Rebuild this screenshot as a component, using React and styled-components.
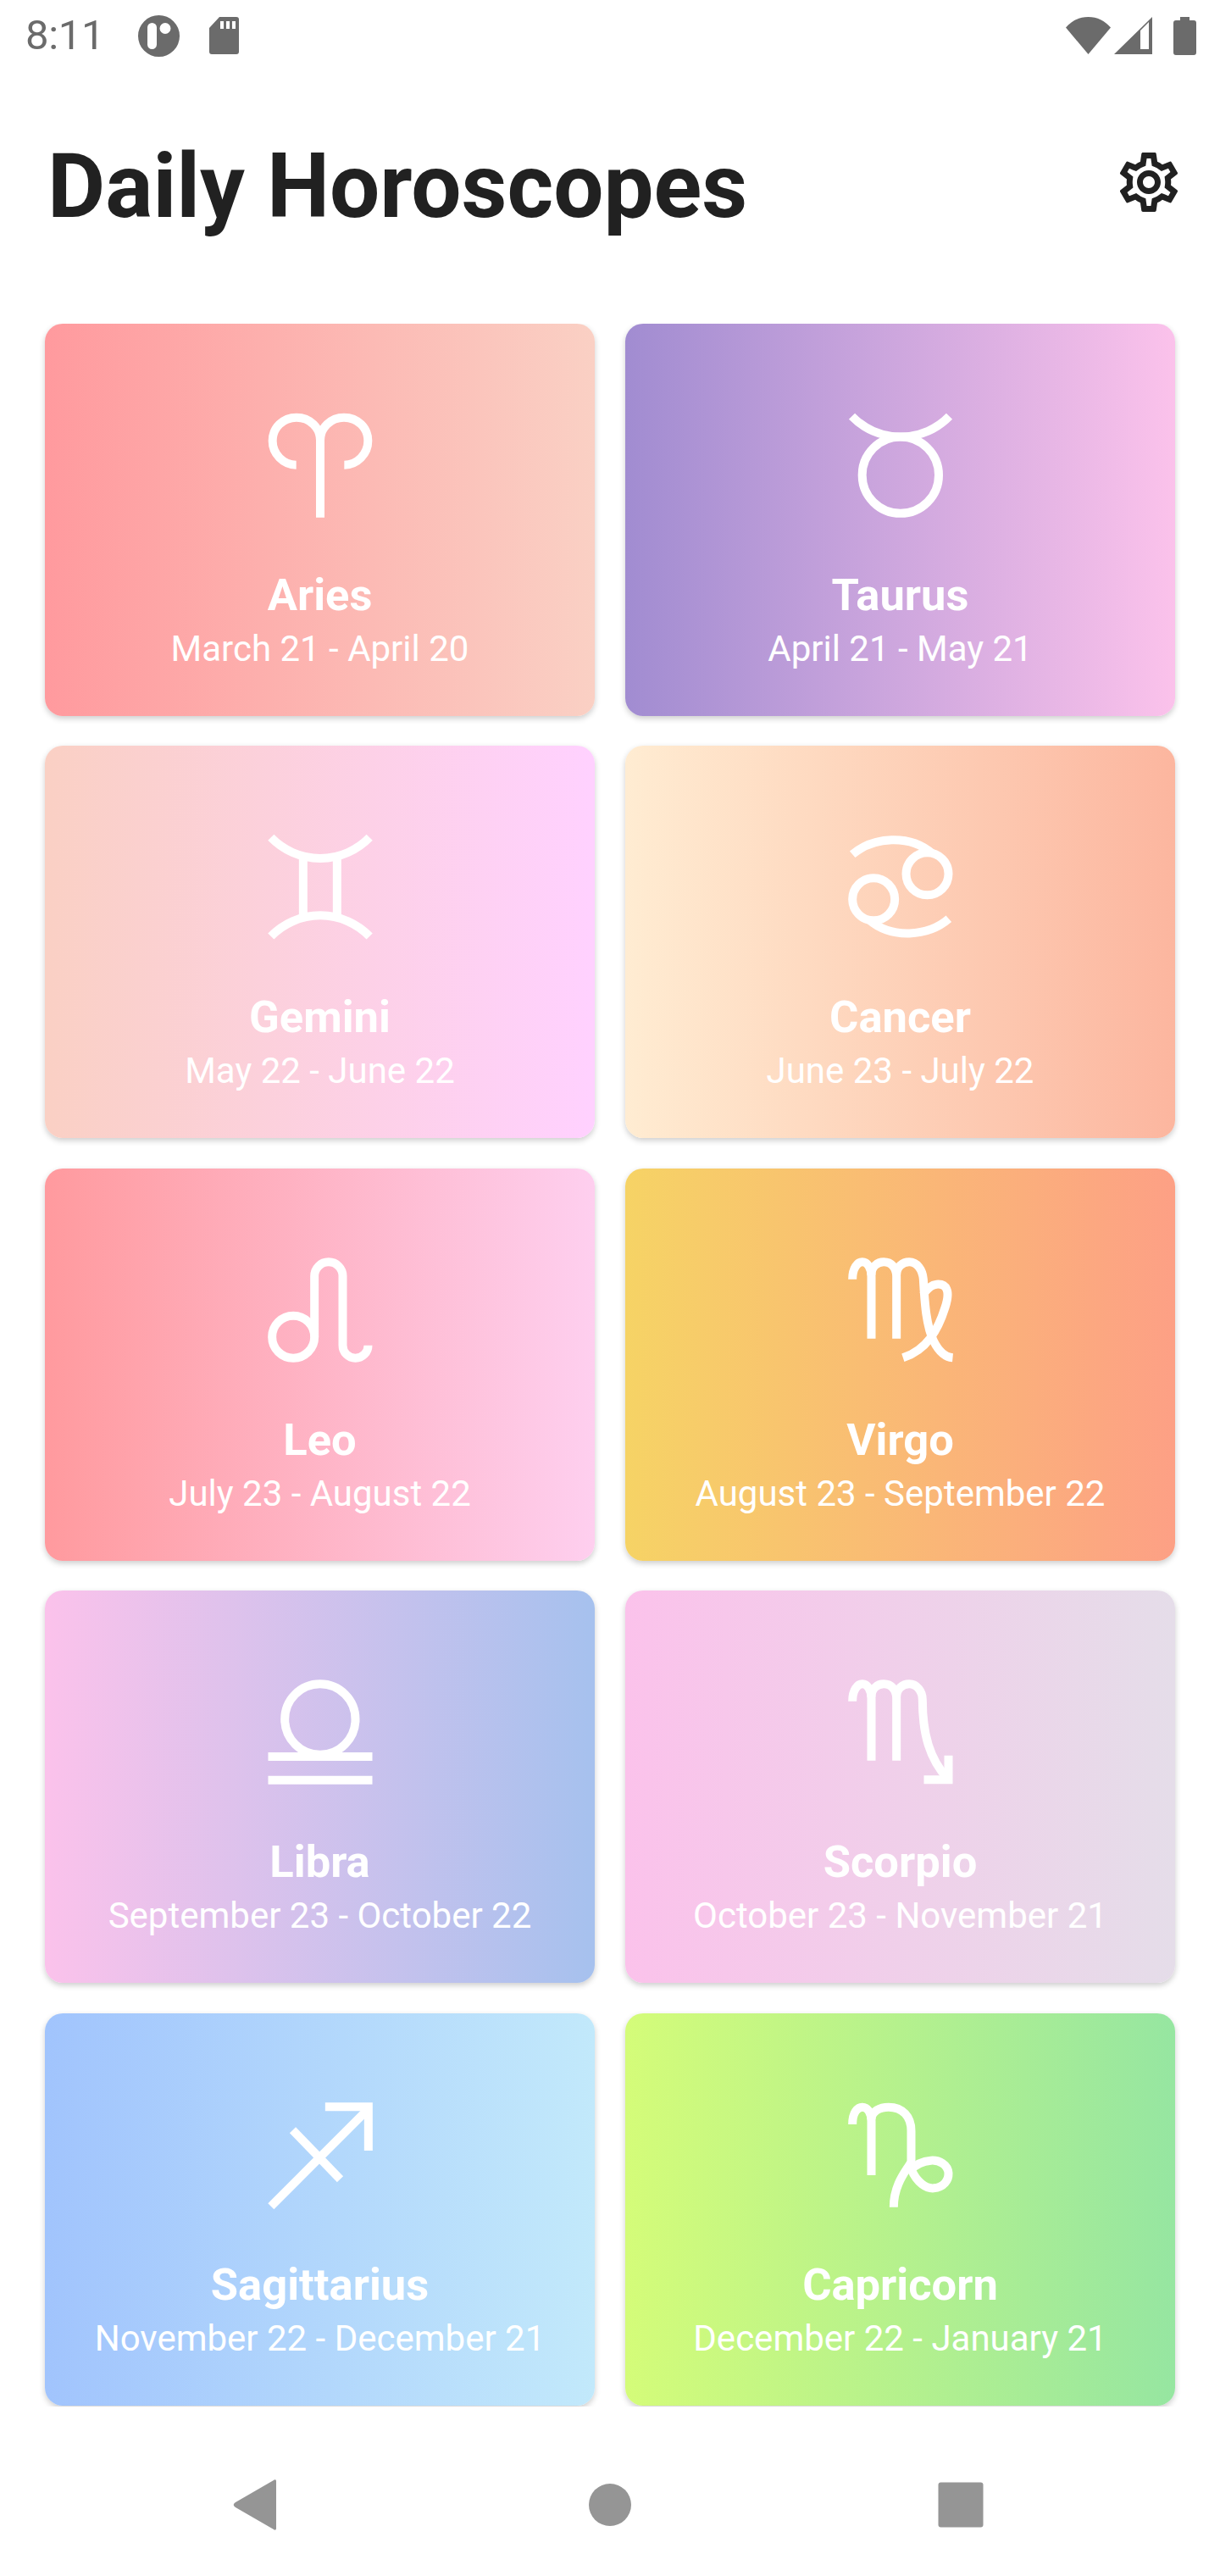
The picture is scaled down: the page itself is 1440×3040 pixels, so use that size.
import styled, { createGlobalStyle } from "styled-components";
import { MdOutlineSettings } from "react-icons/md";

const GlobalStyle = createGlobalStyle`
  html, body {
    margin: 0;
    padding: 0;
    background: #fff;
    font-family: Roboto, "Liberation Sans", sans-serif;
  }
`;

const Screen = styled.div`
  width: 1440px;
  height: 3040px;
  display: flex;
  flex-direction: column;
  background: #fff;
  overflow: hidden;
`;

const StatusBar = styled.div`
  height: 84px;
  flex: none;
  display: flex;
  align-items: center;
  justify-content: space-between;
  padding: 0 28px 0 30px;
  color: #6b6b6b;
`;

const StatusGroup = styled.div`
  display: flex;
  align-items: center;
  gap: ${(p) => p.$gap}px;
`;

const Time = styled.span`
  font-size: 49px;
  line-height: 56px;
  width: 87px;
  margin-right: 11px;
  letter-spacing: -0.3px;
`;

const StatusIcon = styled.svg`
  display: block;
  flex: none;
  fill: #6b6b6b;
  margin-left: ${(p) => p.$push || 0}px;
`;

const Header = styled.header`
  flex: none;
  display: flex;
  justify-content: space-between;
  align-items: flex-start;
  padding: 77px 42px 100.75px 56px;
`;

const Title = styled.h1`
  margin: 0;
  font-size: 105px;
  line-height: 120px;
  font-weight: 700;
  color: #212121;
`;

const Settings = styled(MdOutlineSettings)`
  display: block;
  margin-top: 12px;
  color: #212121;
`;

const List = styled.main`
  height: 2458px;
  flex: none;
  overflow: hidden;
  padding: 0 53px;
  box-sizing: border-box;
  display: grid;
  grid-template-columns: 649px 649px;
  grid-auto-rows: 463px;
  column-gap: 36px;
  row-gap: 35.5px;
  align-content: start;
`;

const Card = styled.article`
  border-radius: 21px;
  background: linear-gradient(to right, ${(p) => p.$from}, ${(p) => p.$to});
  box-shadow: 0 3px 7px rgba(0, 0, 0, 0.2);
  color: #fff;
  display: flex;
  flex-direction: column;
  align-items: center;
  padding-top: 97px;
  box-sizing: border-box;
`;

const Glyph = styled.svg`
  display: block;
  width: 140px;
  height: 140px;
  flex: none;
  margin-bottom: 52px;
  fill: none;
  stroke: #fff;
  stroke-width: 30;
`;

const SignName = styled.div`
  font-size: 52.5px;
  line-height: 62px;
  font-weight: 700;
`;

const SignDates = styled.div`
  font-size: 42px;
  line-height: 50px;
  font-weight: 400;
  margin-top: 8px;
`;

const NavBar = styled.nav`
  flex: 1;
  display: grid;
  grid-template-columns: repeat(3, 414px);
  justify-content: center;
  justify-items: center;
  align-items: center;
  padding-top: 32px;
`;

const NavIcon = styled.svg`
  display: block;
  width: 84px;
  height: 84px;
  fill: #959595;
`;

const signs = [
  {
    name: "Aries", dates: "March 21 - April 20", from: "#ff9a9e", to: "#fad0c4", cx: 412, cy: 238,
    art: (
      <>
        <path d="M327 237C280 237 243 197 243 152C243 105 280 69 328 69C375 69 412 105 412 150V423" />
        <path d="M497 237C544 237 581 197 581 152C581 105 544 69 496 69C449 69 412 105 412 150" />
      </>
    ),
  },
  {
    name: "Taurus", dates: "April 21 - May 21", from: "#a18cd1", to: "#fbc2eb", cx: 307.5, cy: 238,
    art: (
      <>
        <circle cx="307" cy="273" r="135.5" />
        <path d="M135 65A241 241 0 0 0 480 65" />
      </>
    ),
  },
  {
    name: "Gemini", dates: "May 22 - June 22", from: "#fad0c4", to: "#ffd1ff", cx: 292.5, cy: 264,
    art: (
      <>
        <path d="M118 88A243 243 0 0 0 467 88" />
        <path d="M118 438A243 243 0 0 1 467 438" />
        <path d="M232 160V365M352 160V365" />
      </>
    ),
  },
  {
    name: "Cancer", dates: "June 23 - July 22", from: "#ffecd2", to: "#fcb69f", cx: 307.5, cy: 264,
    art: (
      <>
        <circle cx="402" cy="217" r="75" />
        <circle cx="212" cy="307" r="75" />
        <path d="M137 148C210 85 340 75 420 145" />
        <path d="M478 376C405 439 275 449 195 379" />
      </>
    ),
  },
  {
    name: "Leo", dates: "July 23 - August 22", from: "#ff9a9e", to: "#fecfef", cx: 292.5, cy: 259,
    art: (
      <>
        <circle cx="197" cy="354" r="75" />
        <path d="M272 354V139A50 50 0 0 1 372 139V384A45 45 0 0 0 462 384" />
      </>
    ),
  },
  {
    name: "Virgo", dates: "August 23 - September 22", from: "#f6d365", to: "#fda085", cx: 307.5, cy: 259,
    art: (
      <>
        <path d="M137 150C137 110 155 89 172 89C190 89 204 110 204 140V360" />
        <path d="M204 135C204 105 225 89 248 89C275 89 293 110 293 140V360" />
        <path d="M293 135C293 105 315 89 338 89C365 89 385 115 388 150C392 210 395 310 425 370C440 400 460 425 492 428" />
        <path d="M316 428C400 400 440 330 465 250C485 190 470 165 435 168C415 170 400 185 388 205" />
      </>
    ),
  },
  {
    name: "Libra", dates: "September 23 - October 22", from: "#fbc2eb", to: "#a6c1ee", cx: 292.5, cy: 253,
    art: (
      <>
        <circle cx="292" cy="208" r="125" />
        <path d="M108 340H477M108 423H477" />
      </>
    ),
  },
  {
    name: "Scorpio", dates: "October 23 - November 21", from: "#fbc2eb", to: "#e5dde9", cx: 307.5, cy: 254,
    art: (
      <>
        <path d="M137 145C137 105 155 84 172 84C190 84 204 105 204 135V355" />
        <path d="M204 130C204 100 225 84 248 84C275 84 293 105 293 135V355" />
        <path d="M293 130C293 100 315 84 338 84C365 84 385 110 385 140C385 260 410 350 475 420" />
        <path d="M390 423H477V337" />
      </>
    ),
  },
  {
    name: "Sagittarius", dates: "November 22 - December 21", from: "#a1c4fd", to: "#c2e9fb", cx: 292.5, cy: 250,
    art: (
      <>
        <path d="M118 432L462 88" />
        <path d="M310 80H463V235" />
        <path d="M195 162L363 336" />
      </>
    ),
  },
  {
    name: "Capricorn", dates: "December 22 - January 21", from: "#d4fc79", to: "#96e6a1", cx: 307.5, cy: 250,
    art: (
      <>
        <path d="M137 142C137 100 155 81 172 81C190 81 204 100 204 130V322" />
        <path d="M204 125C204 95 235 81 265 81C315 81 345 115 345 165V270C345 290 283 340 283 435" />
        <path d="M345 300C365 350 400 370 425 368C460 365 478 340 477 315C475 285 445 268 415 270C385 272 360 285 342 305" />
      </>
    ),
  },
];

const SignCard = ({ sign }) => (
  <Card $from={sign.from} $to={sign.to}>
    <Glyph viewBox={`${sign.cx - 210} ${sign.cy - 210} 420 420`}>{sign.art}</Glyph>
    <SignName>{sign.name}</SignName>
    <SignDates>{sign.dates}</SignDates>
  </Card>
);

export default function App() {
  return (
    <>
      <GlobalStyle />
      <Screen>
        <StatusBar>
          <StatusGroup $gap={35}>
            <Time>8:11</Time>
            <StatusIcon width="49" height="49" viewBox="0 0 49 49">
              <path
                fillRule="evenodd"
                d="M24.5 0a24.5 24.5 0 1 0 0 49a24.5 24.5 0 1 0 0-49ZM16.5 9a5.5 5.5 0 0 1 5.5 5.5v20a5.5 5.5 0 0 1-11 0v-20a5.5 5.5 0 0 1 5.5-5.5ZM32 9a6.5 6.5 0 1 1 0 13a6.5 6.5 0 1 1 0-13Z"
              />
            </StatusIcon>
            <StatusIcon width="35" height="44" viewBox="0 0 35 44">
              <path
                fillRule="evenodd"
                d="M12 0H32a3 3 0 0 1 3 3V41a3 3 0 0 1-3 3H3a3 3 0 0 1-3-3V13ZM13 5V14H17V5ZM20 5V14H24V5ZM27 5V14H31V5Z"
              />
            </StatusIcon>
          </StatusGroup>
          <StatusGroup $gap={4}>
            <StatusIcon width="53" height="44" viewBox="0 0 53 44">
              <path d="M26.5 44L0 12.5C7 4.5 16 0 26.5 0S46 4.500 53 12.5Z" />
            </StatusIcon>
            <StatusIcon width="45" height="44" viewBox="0 0 45 44">
              <path
                fillRule="evenodd"
                d="M45 0V44H0ZM31 16V38H41V6Z"
              />
            </StatusIcon>
            <StatusIcon $push={21} width="27" height="45" viewBox="0 0 27 45">
              <path d="M8 0H19V4H24a3 3 0 0 1 3 3V42a3 3 0 0 1-3 3H3a3 3 0 0 1-3-3V7a3 3 0 0 1 3-3H8Z" />
            </StatusIcon>
          </StatusGroup>
        </StatusBar>

        <Header>
          <Title>Daily Horoscopes</Title>
          <Settings size={84} />
        </Header>

        <List>
          {signs.map((sign) => (
            <SignCard key={sign.name} sign={sign} />
          ))}
        </List>

        <NavBar>
          <NavIcon viewBox="0 0 84 84">
            <path d="M62 14V70C62 72 60 72 59 71L14 45C11 43 11 41 14 39L59 13C60 12 62 12 62 14Z" />
          </NavIcon>
          <NavIcon viewBox="0 0 84 84">
            <circle cx="42" cy="42" r="25" />
          </NavIcon>
          <NavIcon viewBox="0 0 84 84">
            <rect x="15.500" y="15.500" width="53" height="53" rx="3" />
          </NavIcon>
        </NavBar>
      </Screen>
    </>
  );
}
